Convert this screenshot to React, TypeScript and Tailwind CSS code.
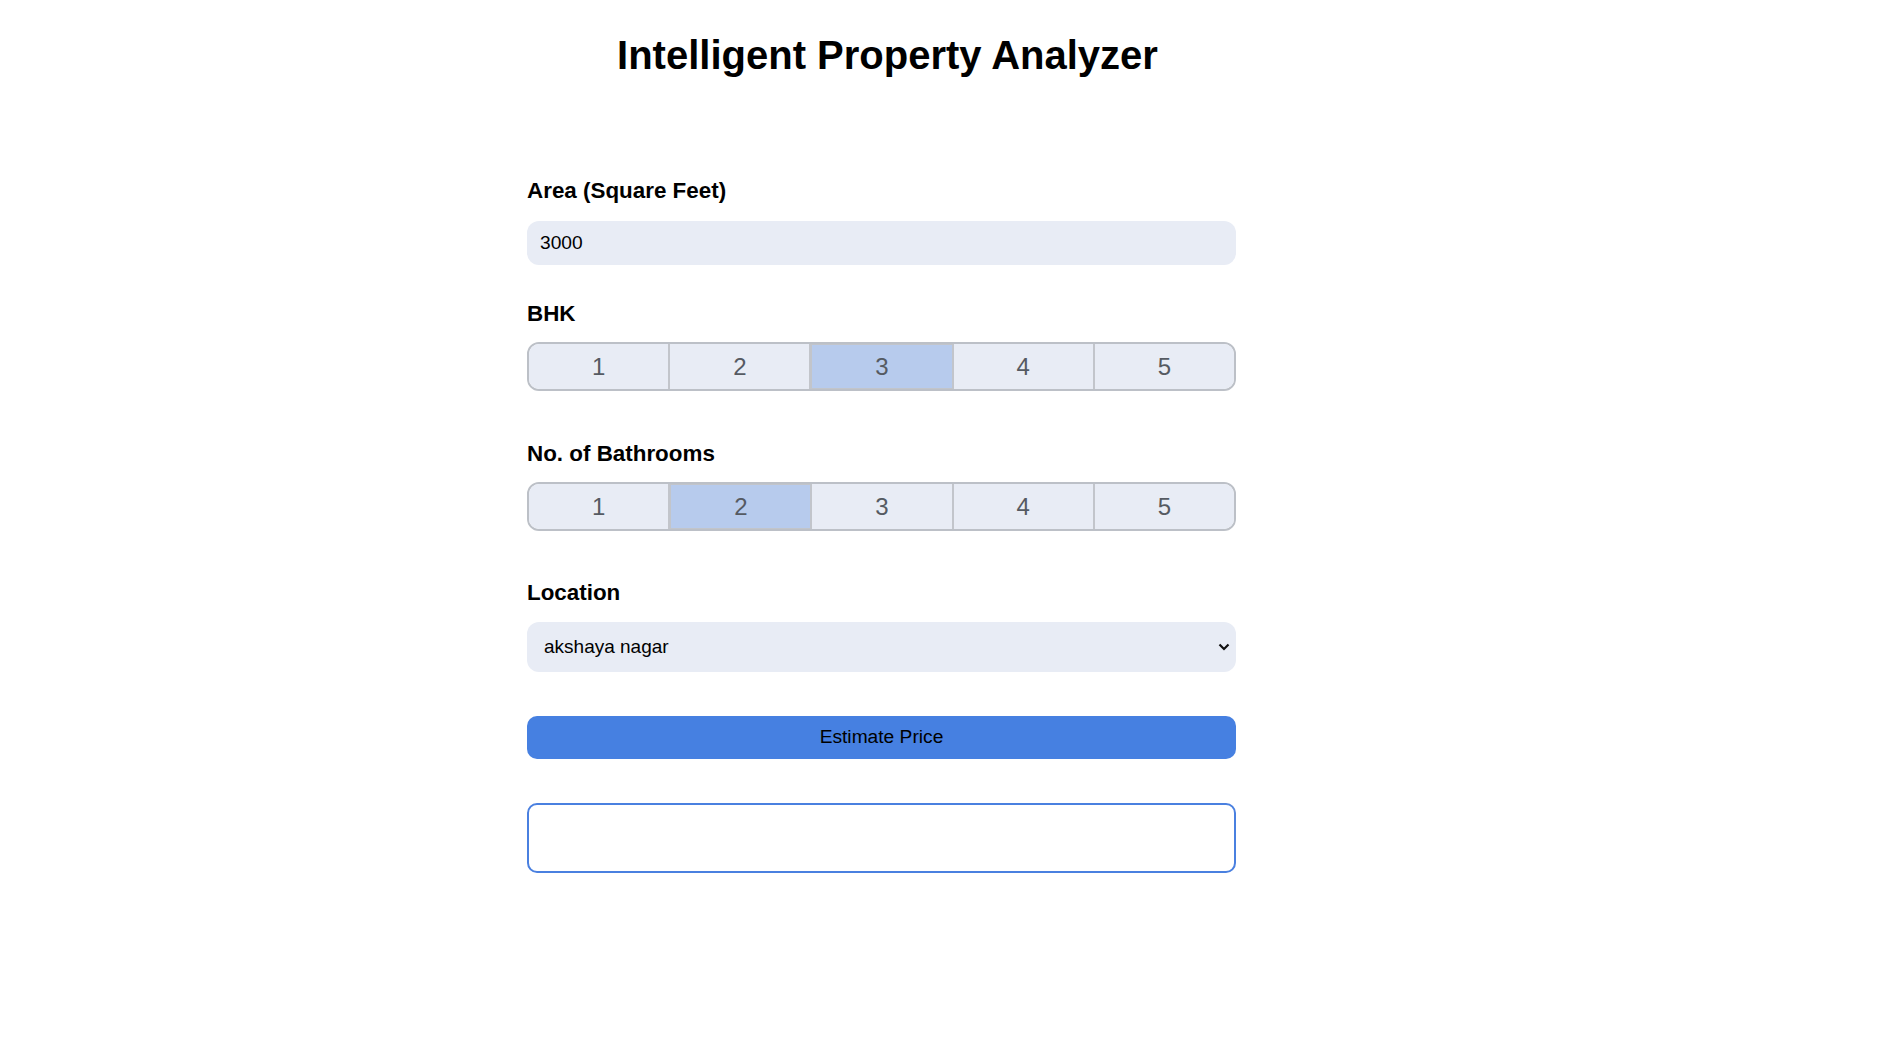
import { useState } from "react";

const options = [1, 2, 3, 4, 5];

function SegmentGroup({ value, onChange }: { value: number; onChange: (v: number) => void }) {
  return (
    <div className="flex h-[49px] w-[709px] overflow-hidden rounded-[12px] border-2 border-[#bcc0c7]">
      {options.map((n, i) => {
        const active = n === value;
        return (
          <button
            key={n}
            type="button"
            onClick={() => onChange(n)}
            className={`flex flex-1 items-center justify-center text-[24px] text-[#555a62] ${
              i < options.length - 1 ? "border-r-2 border-[#c2c5cb]" : ""
            } ${active ? "border border-[#8fa6cc] bg-[#b7cbed]" : "bg-[#e8ecf5]"}`}
          >
            {n}
          </button>
        );
      })}
    </div>
  );
}

export default function App() {
  const [bhk, setBhk] = useState(3);
  const [bath, setBath] = useState(2);
  const [area, setArea] = useState("3000");

  return (
    <div className="min-h-screen w-full bg-white font-['Liberation_Sans',Arial,sans-serif] text-black">
      <div className="ml-[527px] w-[721px] pt-[32px]">
        <h1 className="text-center text-[40px] font-bold leading-[46px]">Intelligent Property Analyzer</h1>

        <form className="mt-[100px] flex w-[709px] flex-col" onSubmit={(e) => e.preventDefault()}>
          <label className="text-[22.4px] font-bold leading-[26px]">Area (Square Feet)</label>
          <input
            value={area}
            onChange={(e) => setArea(e.target.value)}
            className="mt-[17px] h-[44px] w-full rounded-[12px] bg-[#e8ecf5] px-[13px] text-[19.2px] outline-none"
          />

          <label className="mt-[36px] text-[22.4px] font-bold leading-[26px]">BHK</label>
          <div className="mt-[15px]">
            <SegmentGroup value={bhk} onChange={setBhk} />
          </div>

          <label className="mt-[50px] text-[22.4px] font-bold leading-[26px]">No. of Bathrooms</label>
          <div className="mt-[15px]">
            <SegmentGroup value={bath} onChange={setBath} />
          </div>

          <label className="mt-[49px] text-[22.4px] font-bold leading-[26px]">Location</label>
          <div className="relative mt-[16px] h-[50px] w-full">
            <select className="h-full w-full appearance-none rounded-[12px] bg-[#e8ecf5] px-[17px] text-[19px] outline-none">
              <option>akshaya nagar</option>
            </select>
            <svg
              viewBox="0 0 12 8"
              className="pointer-events-none absolute right-[6px] top-[21px] h-[8px] w-[12px]"
              fill="none"
              stroke="#111"
              strokeWidth="2.2"
            >
              <path d="M1.5 1.5L6 6l4.5-4.5" />
            </svg>
          </div>

          <button
            type="submit"
            className="mt-[44px] h-[43px] w-full rounded-[10px] bg-[#4680e1] text-[19.2px] text-black"
          >
            Estimate Price
          </button>

          <div className="mt-[44px] h-[70px] w-full rounded-[10px] border-2 border-[#4a80e0]" />
        </form>
      </div>
    </div>
  );
}
